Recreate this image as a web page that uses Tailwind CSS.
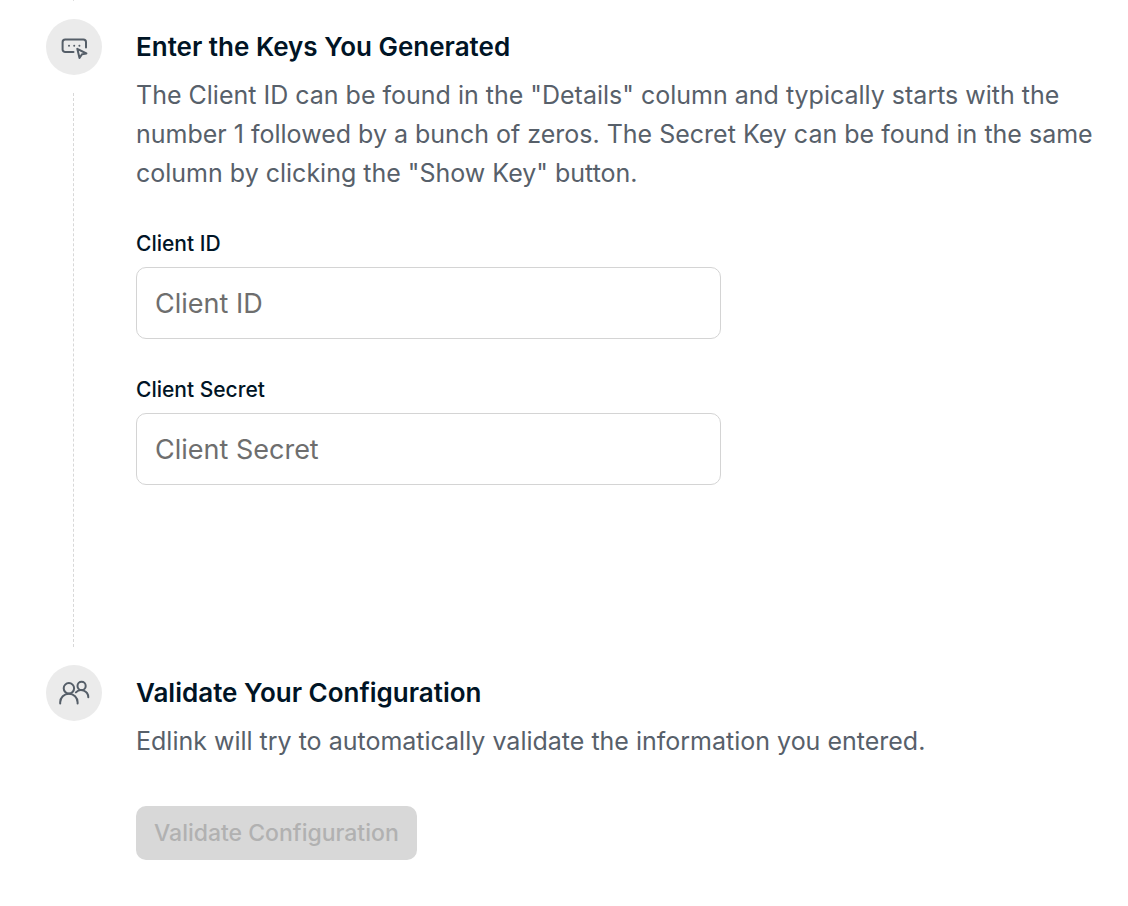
<!DOCTYPE html>
<html lang="en">
<head>
<meta charset="utf-8">
<meta name="viewport" content="width=device-width, initial-scale=1">
<title>Integration setup</title>
<script src="https://cdn.jsdelivr.net/npm/@tailwindcss/browser@4"></script>
</head>
<body class="bg-white font-['Inter','Liberation_Sans',sans-serif] text-[#001425]">
<main class="pr-6 pb-11 pl-[46px]">
  <div class="mb-[18px] ml-[27px] h-px w-px bg-[#dedede]"></div>
  <ol>
    <li class="flex gap-[34px]">
      <div class="flex w-14 shrink-0 flex-col">
        <div class="flex size-14 items-center justify-center rounded-full bg-[#ebebeb]">
          <svg class="size-8" viewBox="0 0 32 32" fill="none" stroke="#555e68" stroke-width="2" stroke-linecap="round" stroke-linejoin="round" aria-hidden="true">
            <path d="M15.500 21H7.200a2.600 2.600 0 0 1-2.600-2.600v-7.200a2.600 2.600 0 0 1 2.600-2.600h18.200a2.600 2.600 0 0 1 2.600 2.600v5.200"/>
            <path d="M19.300 17.800l2.200 9.200 2.500-3.700 4.400-.800z"/>
            <path d="M11 14.800h.01M16.200 14.800h.01M21.400 14.800h.01"/>
          </svg>
        </div>
        <div class="mt-[18px] mb-[18px] ml-[27px] flex-1 border-l border-dashed border-[#d8d8d8]"></div>
      </div>
      <section class="min-w-0 flex-1 pb-[180px]">
        <h2 class="flex h-14 items-center pb-0.5 text-[26px] font-semibold">Enter the Keys You Generated</h2>
        <p class="pt-px text-[25px] leading-[39px] text-[#57606a]">The Client ID can be found in the "Details" column and typically starts with the number 1 followed by a bunch of zeros. The Secret Key can be found in the same column by clicking the "Show Key" button.</p>
        <form class="mt-[39px] flex max-w-[585px] flex-col gap-[39px]">
          <div class="flex flex-col gap-[11px]">
            <label for="client-id" class="text-[21px] leading-6 font-medium">Client ID</label>
            <input id="client-id" type="text" placeholder="Client ID" class="h-[72px] w-full rounded-[10px] border border-[#d4d4d4] px-[18px] text-[27px] placeholder:text-[#6e6e6e]">
          </div>
          <div class="flex flex-col gap-[11px]">
            <label for="client-secret" class="text-[21px] leading-6 font-medium">Client Secret</label>
            <input id="client-secret" type="text" placeholder="Client Secret" class="h-[72px] w-full rounded-[10px] border border-[#d4d4d4] px-[18px] text-[27px] placeholder:text-[#6e6e6e]">
          </div>
        </form>
      </section>
    </li>
    <li class="flex gap-[34px]">
      <div class="flex size-14 shrink-0 items-center justify-center rounded-full bg-[#ebebeb]">
        <svg class="size-8" viewBox="0 0 32 32" fill="none" stroke="#555e68" stroke-width="2" stroke-linecap="round" aria-hidden="true">
          <circle cx="10.900" cy="11.300" r="5.200"/>
          <path d="M2.200 26.400v-1.200a8.700 8.500 0 0 1 17.400 0v1.200"/>
          <circle cx="23.600" cy="8.900" r="4.100"/>
          <path d="M17.900 15.400a7.200 7.200 0 0 1 12.400 4.800"/>
        </svg>
      </div>
      <section class="min-w-0 flex-1">
        <h2 class="flex h-14 items-center pb-0.5 text-[26px] font-semibold">Validate Your Configuration</h2>
        <p class="pt-px text-[25px] leading-[39px] text-[#57606a]">Edlink will try to automatically validate the information you entered.</p>
        <button type="button" disabled class="mt-[45px] h-[54px] rounded-[10px] bg-[#d8d8d8] px-[18px] text-[23px] font-medium text-[#b1b1b1]">Validate Configuration</button>
      </section>
    </li>
  </ol>
</main>
</body>
</html>
